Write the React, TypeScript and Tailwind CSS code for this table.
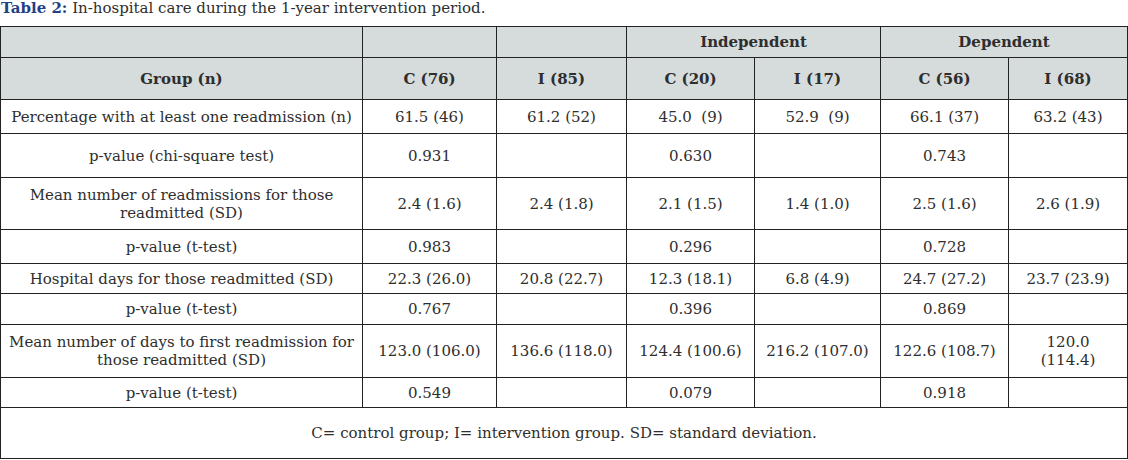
import React from "react";

const rows: { label: string[]; cells: string[]; h: string }[] = [
  { label: ["Percentage with at least one readmission (n)"], cells: ["61.5 (46)", "61.2 (52)", "45.0 \u00a0(9)", "52.9 \u00a0(9)", "66.1 (37)", "63.2 (43)"], h: "h-[34px]" },
  { label: ["p-value (chi-square test)"], cells: ["0.931", "", "0.630", "", "0.743", ""], h: "h-[44px]" },
  { label: ["Mean number of readmissions for those", "readmitted (SD)"], cells: ["2.4 (1.6)", "2.4 (1.8)", "2.1 (1.5)", "1.4 (1.0)", "2.5 (1.6)", "2.6 (1.9)"], h: "h-[52px]" },
  { label: ["p-value (t-test)"], cells: ["0.983", "", "0.296", "", "0.728", ""], h: "h-[34px]" },
  { label: ["Hospital days for those readmitted (SD)"], cells: ["22.3 (26.0)", "20.8 (22.7)", "12.3 (18.1)", "6.8 (4.9)", "24.7 (27.2)", "23.7 (23.9)"], h: "h-[30px]" },
  { label: ["p-value (t-test)"], cells: ["0.767", "", "0.396", "", "0.869", ""], h: "h-[31px]" },
  { label: ["Mean number of days to first readmission for", "those readmitted (SD)"], cells: ["123.0 (106.0)", "136.6 (118.0)", "124.4 (100.6)", "216.2 (107.0)", "122.6 (108.7)", "120.0\n(114.4)"], h: "h-[53px]" },
  { label: ["p-value (t-test)"], cells: ["0.549", "", "0.079", "", "0.918", ""], h: "h-[30px]" },
];

const td = "border border-[#222] text-center align-middle p-0";

export default function App() {
  return (
    <div className="w-[1128px] h-[460px] bg-white text-[#2e2e2e] text-[15px] leading-[18px]" style={{ fontFamily: '"DejaVu Serif", "Liberation Serif", serif' }}>
      <div className="h-[26px] pt-0 pl-[1px] text-[15px] leading-[16px]">
        <span className="font-bold text-[#253f86]">Table 2:</span> In-hospital care during the 1-year intervention period.
      </div>
      <table className="border-collapse table-fixed w-[1127px]">
        <colgroup>
          <col className="w-[362px]" />
          <col className="w-[134px]" />
          <col className="w-[130px]" />
          <col className="w-[128px]" />
          <col className="w-[126px]" />
          <col className="w-[128px]" />
          <col className="w-[119px]" />
        </colgroup>
        <tbody>
          <tr className="h-[31px] bg-[#d6dcdc] font-bold">
            <td className={td}></td>
            <td className={td}></td>
            <td className={td}></td>
            <td className={td} colSpan={2}>Independent</td>
            <td className={td} colSpan={2}>Dependent</td>
          </tr>
          <tr className="h-[42px] bg-[#d6dcdc] font-bold">
            <td className={td}>Group (n)</td>
            <td className={td}>C (76)</td>
            <td className={td}>I (85)</td>
            <td className={td}>C (20)</td>
            <td className={td}>I (17)</td>
            <td className={td}>C (56)</td>
            <td className={td}>I (68)</td>
          </tr>
          {rows.map((r, i) => (
            <tr key={i} className={r.h}>
              <td className={td}>
                {r.label.map((l, j) => (
                  <div key={j}>{l}</div>
                ))}
              </td>
              {r.cells.map((c, j) => (
                <td key={j} className={td + " whitespace-pre-line"}>
                  {c}
                </td>
              ))}
            </tr>
          ))}
          <tr className="h-[51px]">
            <td className={td} colSpan={7}>
              C= control group; I= intervention group. SD= standard deviation.
            </td>
          </tr>
        </tbody>
      </table>
    </div>
  );
}
